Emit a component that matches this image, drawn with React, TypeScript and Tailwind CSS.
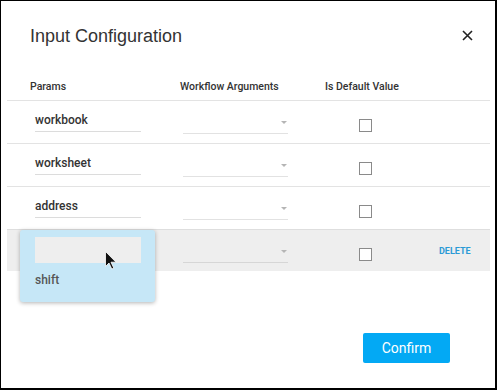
const rows = [
  { key: "workbook", value: "workbook" },
  { key: "worksheet", value: "worksheet" },
  { key: "address", value: "address" },
];

function SelectCell({ active }: { active?: boolean }) {
  return (
    <div className={`ml-[42px] flex h-[33px] w-[105px] justify-end border-b pt-[20px] pr-[1px] ${active ? "border-[#d6d6d6]" : "border-[#e2e2e2]"}`}>
      <svg width="6" height="3" viewBox="0 0 6 3" aria-hidden>
        <path d="M0 0 L6 0 L3 3 Z" fill="#b5b5b5" />
      </svg>
    </div>
  );
}

function Checkbox() {
  return <div className="ml-[71px] mt-[18px] h-[13px] w-[13px] border border-[#8a8a8a] bg-white" />;
}

export default function App() {
  return (
    <div className="relative h-[390px] w-[497px] border-t border-l border-r-2 border-b-2 border-black bg-white font-['Roboto',sans-serif]">
      {/* title */}
      <div className="mt-[23px] flex h-[24px] items-start pl-[29px]">
        <h2 className="font-['Liberation_Sans',sans-serif] text-[18px] leading-[24px] text-[#333]">
          Input Configuration
        </h2>
        <svg className="mt-[6px] ml-auto mr-[22px]" width="11" height="11" viewBox="0 0 11 11" aria-hidden>
          <path d="M1 1 L10 10 M10 1 L1 10" stroke="#222" strokeWidth="1.6" />
        </svg>
      </div>

      {/* headers */}
      <div className="mt-[31px] flex h-[21px] pl-[29px] text-[10.5px] font-medium leading-[16px] text-[#333]">
        <span className="w-[150px]">Params</span>
        <span className="w-[145px]">Workflow Arguments</span>
        <span>Is Default Value</span>
      </div>

      {/* rows */}
      <div className="ml-[6px] w-[483px]">
        {rows.map((row) => (
          <div key={row.key} className="flex h-[43px] border-t border-[#e3e3e3] pl-[28px]">
            <div className="w-[106px] self-start border-b border-[#dcdcdc] pt-[11px] pb-[3px] text-[12px] font-medium leading-[16px] text-[#333]">
              {row.value}
            </div>
            <SelectCell />
            <Checkbox />
          </div>
        ))}
        <div className="flex h-[42px] border-t border-[#dedede] bg-[#eeeeee] pl-[28px]">
          <div className="h-[32px] w-[106px]" />
          <SelectCell active />
          <Checkbox />
          <span className="ml-[67px] mt-[15px] text-[9px] font-bold leading-[12px] text-[#2b9ad6]">
            DELETE
          </span>
        </div>
      </div>

      {/* footer */}
      <div className="mt-[62px] flex justify-end pr-[45px]">
        <button className="h-[30px] w-[87px] rounded-[2px] bg-[#03a9f4] text-[14px] text-white">
          Confirm
        </button>
      </div>

      {/* autocomplete popup */}
      <div className="absolute left-[19px] top-[229px] h-[72px] w-[135px] rounded-[3px] bg-[#c6e7f7] shadow-[0_1px_4px_rgba(0,0,0,0.3)]">
        <div className="ml-[15px] mt-[7px] h-[26px] w-[106px] bg-[#eeeeee]" />
        <div className="ml-[15px] mt-[9px] text-[12px] font-medium leading-[16px] text-[#555]">shift</div>
      </div>

      {/* mouse pointer */}
      <svg className="absolute left-[104px] top-[250px]" width="12" height="19" viewBox="0 0 12 19" aria-hidden>
        <path d="M0.5 0.5 L0.5 15.5 L4 12 L6.8 18 L8.8 17.1 L6 11.2 L11 11.2 Z" fill="#111" stroke="#fff" strokeWidth="0.8" />
      </svg>
    </div>
  );
}
